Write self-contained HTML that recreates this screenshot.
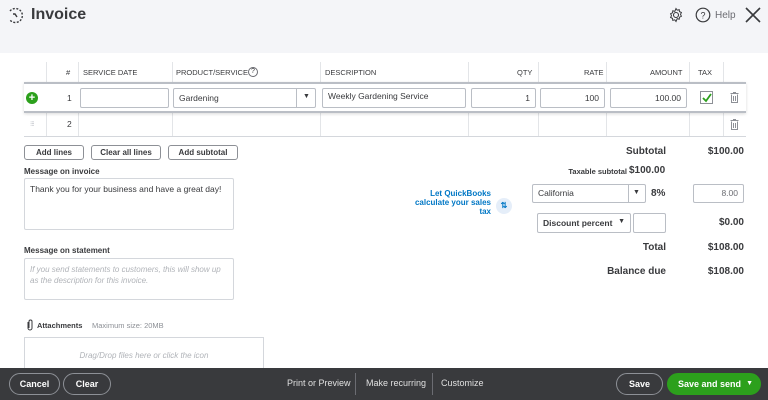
<!DOCTYPE html>
<html><head><meta charset="utf-8"><style>
*{box-sizing:border-box;margin:0;padding:0}
body{width:768px;height:400px;overflow:hidden;background:#fff;font-family:"Liberation Sans",sans-serif;color:#393a3d;position:relative}
.a{position:absolute}
.hdr{left:0;top:0;width:768px;height:53px;background:#f4f5f8}
.th{font-size:7.5px;top:68px;color:#393a3d}
.vl{width:1px;background:#e3e5e8;top:62px;height:75px}
.in{border:1px solid #babec5;border-radius:2px;background:#fff;height:20px;font-size:8.5px;padding:4px 5px;color:#393a3d}
.btn{border:1px solid #8d9096;border-radius:3px;height:15px;font-size:8px;font-weight:bold;text-align:center;line-height:13px;top:145px}
.lbl{font-size:8px;font-weight:bold}
.r{text-align:right;font-weight:bold}
.foot{left:0;top:368px;width:768px;height:32px;background:#393a3d}
.fb{border:1px solid #8d9096;border-radius:14px;height:22px;top:373px;color:#fff;font-size:9px;font-weight:bold;text-align:center;line-height:20px}
.fl{color:#e0e0e0;font-size:9px;top:378px}
</style></head><body>
<div class="a hdr"></div>
<svg class="a" style="left:7px;top:7px" width="17" height="17" viewBox="0 0 17 17"><path d="M3 4A7 7 0 1 1 3 13" fill="none" stroke="#393a3d" stroke-width="1.4" stroke-dasharray="2 1.5"/><path d="M6 7l2 0 2 3" fill="none" stroke="#393a3d" stroke-width="1.4"/></svg>
<div class="a" style="left:31px;top:6px;font-size:16px;font-weight:bold">Invoice</div>
<svg class="a" style="left:668px;top:7px" width="16" height="16" viewBox="0 0 16 16"><circle cx="8" cy="8" r="2.5" fill="none" stroke="#393a3d" stroke-width="1.1"/><path d="M8 1.5l1.2 1.7 2-.6.3 2 1.9.9-.9 1.9.9 1.9-1.9.9-.3 2-2-.6L8 14.5l-1.2-1.7-2 .6-.3-2-1.9-.9.9-1.9-.9-1.9 1.9-.9.3-2 2 .6z" fill="none" stroke="#393a3d" stroke-width="1"/></svg>
<svg class="a" style="left:695px;top:7px" width="16" height="16" viewBox="0 0 16 16"><circle cx="8" cy="8" r="6.8" fill="none" stroke="#393a3d" stroke-width="1.2"/><text x="8" y="11.5" font-size="9" text-anchor="middle" fill="#393a3d" font-family="Liberation Sans">?</text></svg>
<div class="a" style="left:715px;top:10px;font-size:10px;color:#6b6c72">Help</div>
<svg class="a" style="left:745px;top:7px" width="16" height="16"><path d="M1 1L15 15M15 1L1 15" stroke="#393a3d" stroke-width="1.6"/></svg>

<div class="a vl" style="left:46px"></div><div class="a vl" style="left:78px"></div><div class="a vl" style="left:172px"></div><div class="a vl" style="left:320px"></div><div class="a vl" style="left:468px"></div><div class="a vl" style="left:538px"></div><div class="a vl" style="left:606px"></div><div class="a vl" style="left:689px"></div><div class="a vl" style="left:723px"></div>
<div class="a th" style="left:66px">#</div>
<div class="a th" style="left:83px">SERVICE DATE</div>
<div class="a th" style="left:176px">PRODUCT/SERVICE</div>
<div class="a" style="left:248px;top:67px;width:10px;height:10px;border:1px solid #6b6c72;border-radius:50%;font-size:7px;text-align:center;line-height:8px">?</div>
<div class="a th" style="left:325px">DESCRIPTION</div>
<div class="a th" style="left:517px">QTY</div>
<div class="a th" style="left:584px">RATE</div>
<div class="a th" style="left:650px">AMOUNT</div>
<div class="a th" style="left:698px">TAX</div>
<div class="a" style="left:24px;top:82px;width:722px;height:31px;background:#fff;border-top:2px solid #babec5;border-bottom:2px solid #babec5;box-shadow:0 1px 3px rgba(0,0,0,.15)"></div>
<div class="a" style="left:24px;top:136px;width:722px;height:1px;background:#d4d7dc"></div>
<div class="a" style="left:26px;top:92px;width:12px;height:12px;border-radius:50%;background:#2ca01c;color:#fff;font-size:11px;font-weight:bold;text-align:center;line-height:12px">+</div>
<div class="a" style="left:67px;top:93px;font-size:8.5px">1</div>
<div class="a in" style="left:80px;top:88px;width:89px"></div>
<div class="a in" style="left:173px;top:88px;width:143px">Gardening</div>
<div class="a" style="left:296px;top:89px;width:1px;height:18px;background:#babec5"></div>
<div class="a" style="left:303px;top:93px;font-size:7px">▼</div>
<div class="a in" style="left:322px;top:88px;width:144px;padding-top:2px">Weekly Gardening Service</div>
<div class="a in" style="left:471px;top:88px;width:65px;text-align:right">1</div>
<div class="a in" style="left:540px;top:88px;width:65px;text-align:right">100</div>
<div class="a in" style="left:610px;top:88px;width:77px;text-align:right">100.00</div>
<div class="a" style="left:700px;top:91px;width:13px;height:13px;border:1px solid #8d9096;background:#fff"></div>
<svg class="a" style="left:701px;top:92px" width="11" height="11"><path d="M2 6l3 3 5-7" fill="none" stroke="#2ca01c" stroke-width="1.8"/></svg>
<svg class="a" style="left:730px;top:92px" width="9" height="11"><path d="M0.5 1.5h8M3 0.5h3M1.5 2.5v8h6v-8M3.5 4v5M5.5 4v5" fill="none" stroke="#8d9096" stroke-width="1"/></svg>
<div class="a" style="left:30px;top:120px;font-size:7px;color:#babec5;letter-spacing:-1px">⁝⁝⁝</div>
<div class="a" style="left:67px;top:119px;font-size:8.5px">2</div>
<svg class="a" style="left:730px;top:119px" width="9" height="11"><path d="M0.5 1.5h8M3 0.5h3M1.5 2.5v8h6v-8M3.5 4v5M5.5 4v5" fill="none" stroke="#8d9096" stroke-width="1"/></svg>

<div class="a btn" style="left:24px;width:60px">Add lines</div>
<div class="a btn" style="left:91px;width:70px">Clear all lines</div>
<div class="a btn" style="left:168px;width:70px">Add subtotal</div>
<div class="a lbl" style="left:24px;top:167px">Message on invoice</div>
<div class="a" style="left:24px;top:178px;width:210px;height:52px;border:1px solid #d4d7dc;border-radius:2px;font-size:8.5px;padding:5px 5px">Thank you for your business and have a great day!</div>
<div class="a lbl" style="left:24px;top:246px">Message on statement</div>
<div class="a" style="left:24px;top:258px;width:210px;height:42px;border:1px solid #d4d7dc;border-radius:2px;font-size:8px;padding:5px 5px;color:#b0b3b8;font-style:italic;line-height:11px">If you send statements to customers, this will show up as the description for this invoice.</div>
<svg class="a" style="left:26px;top:319px" width="8" height="12"><path d="M2 3v6a2 2 0 0 0 4 0V2.5a1.5 1.5 0 0 0-3 0V9" fill="none" stroke="#393a3d" stroke-width="1"/></svg>
<div class="a" style="left:37px;top:321px;font-size:7.5px;font-weight:bold">Attachments</div>
<div class="a" style="left:92px;top:321px;font-size:7.5px;color:#8d9096">Maximum size: 20MB</div>
<div class="a" style="left:24px;top:337px;width:240px;height:40px;border:1px solid #d4d7dc;font-size:8px;color:#b0b3b8;font-style:italic;text-align:center;padding-top:13px">Drag/Drop files here or click the icon</div>

<div class="a r" style="left:560px;top:146px;width:106px;font-size:10px">Subtotal</div>
<div class="a r" style="left:680px;top:146px;width:64px;font-size:10px">$100.00</div>
<div class="a" style="left:560px;top:167px;width:67px;font-size:7.5px;font-weight:bold;text-align:right">Taxable subtotal</div>
<div class="a" style="left:629px;top:165px;font-size:10px;font-weight:bold">$100.00</div>
<div class="a" style="left:405px;top:189px;width:86px;font-size:8px;font-weight:bold;color:#0077c5;text-align:right;line-height:9px">Let QuickBooks calculate your sales tax</div>
<div class="a" style="left:496px;top:198px;width:16px;height:16px;border-radius:50%;background:#e5eef9;color:#0077c5;font-size:8px;font-weight:bold;text-align:center;line-height:16px">⇅</div>
<div class="a in" style="left:532px;top:184px;width:114px;height:19px;padding-top:3px">California</div>
<div class="a" style="left:628px;top:185px;width:1px;height:17px;background:#babec5"></div>
<div class="a" style="left:633px;top:189px;font-size:7px">▼</div>
<div class="a" style="left:651px;top:188px;font-size:10px;font-weight:bold">8%</div>
<div class="a in" style="left:693px;top:184px;width:51px;height:19px;text-align:right;color:#6b6c72;padding-top:3px">8.00</div>
<div class="a in" style="left:537px;top:213px;width:94px;font-weight:bold;font-size:8.5px;padding-top:4px">Discount percent <span style="float:right;font-size:7px">▼</span></div>
<div class="a in" style="left:633px;top:213px;width:33px"></div>
<div class="a r" style="left:680px;top:217px;width:64px;font-size:10px">$0.00</div>
<div class="a r" style="left:560px;top:242px;width:106px;font-size:10px">Total</div>
<div class="a r" style="left:680px;top:242px;width:64px;font-size:10px">$108.00</div>
<div class="a r" style="left:560px;top:266px;width:106px;font-size:10px">Balance due</div>
<div class="a r" style="left:680px;top:266px;width:64px;font-size:10px">$108.00</div>

<div class="a foot"></div>
<div class="a fb" style="left:9px;width:51px">Cancel</div>
<div class="a fb" style="left:63px;width:48px">Clear</div>
<div class="a fl" style="left:287px">Print or Preview</div>
<div class="a" style="left:355px;top:373px;width:1px;height:22px;background:#6b6c72"></div>
<div class="a fl" style="left:366px">Make recurring</div>
<div class="a" style="left:432px;top:373px;width:1px;height:22px;background:#6b6c72"></div>
<div class="a fl" style="left:441px">Customize</div>
<div class="a fb" style="left:616px;width:47px">Save</div>
<div class="a fb" style="left:667px;width:94px;background:#2ca01c;border-color:#2ca01c;text-align:left;padding-left:10px">Save and send <span style="position:absolute;right:7px;font-size:7px">▼</span></div>
</body></html>
